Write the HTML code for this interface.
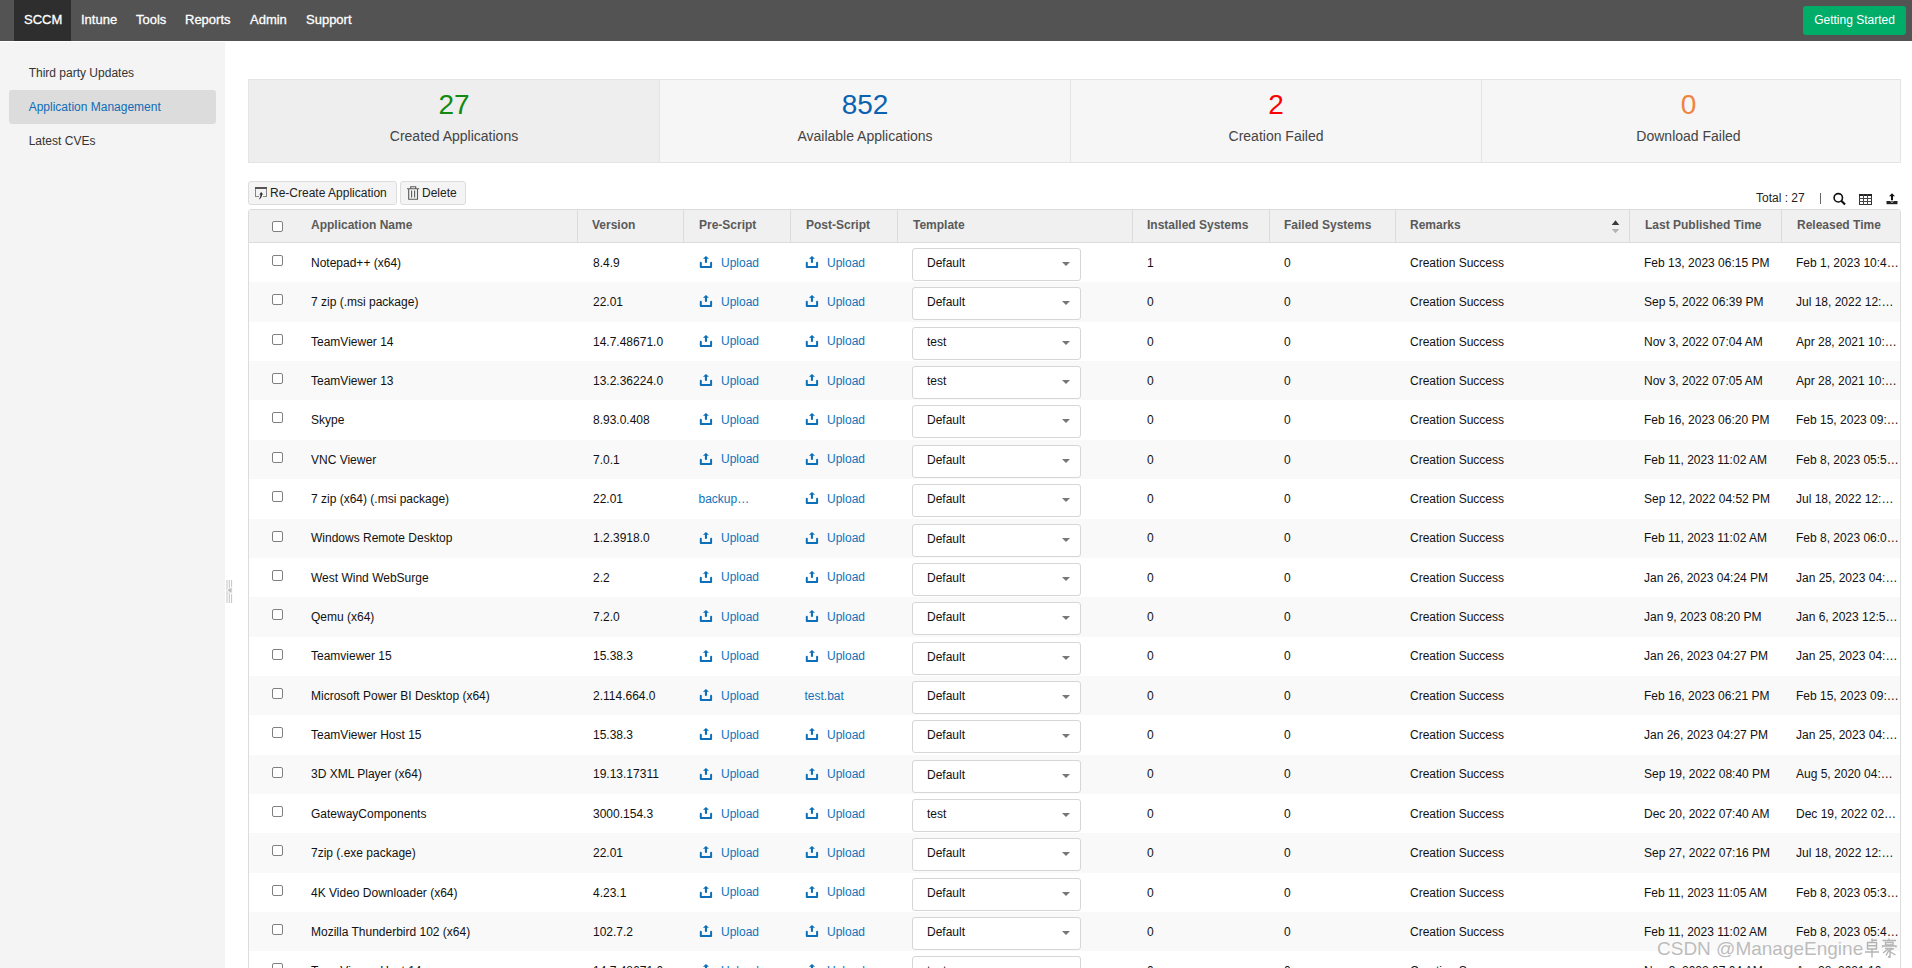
<!DOCTYPE html>
<html><head><meta charset="utf-8">
<style>
*{box-sizing:border-box;margin:0;padding:0}
html,body{width:1912px;height:968px;overflow:hidden;background:#fff;font-family:"Liberation Sans",sans-serif;color:#222}
.abs{position:absolute}
#nav{position:absolute;left:0;top:0;width:1912px;height:41px;background:#535353}
#nav .it{position:absolute;top:0;height:41px;line-height:39px;font-size:13px;color:#fff;white-space:nowrap;-webkit-text-stroke:0.3px #fff}
#nav .act{background:#2e2e2e}
#gs{position:absolute;left:1803px;top:6px;width:103px;height:29px;background:#00ad68;border-radius:3px;color:#fff;font-size:12px;line-height:29px;text-align:center}
#side{position:absolute;left:0;top:42px;width:225px;height:926px;background:#f4f4f4}
#side .si{position:absolute;left:9px;width:207px;height:34px;line-height:34px;padding-left:19.7px;font-size:12px;color:#333;border-radius:3px}
#side .sel{background:#dcdcdc;color:#0f6cb6}
#stats{position:absolute;left:248px;top:79px;width:1653px;height:84px;border:1px solid #e4e4e4;background:#f6f6f6}
.st{position:absolute;top:0;height:82px;text-align:center}
.st .n{position:absolute;left:0;right:0;top:8px;font-size:28px;line-height:34px}
.st .l{position:absolute;left:0;right:0;top:48px;font-size:14px;line-height:16px;color:#444}
.vd{position:absolute;top:0;width:1px;height:82px;background:#e4e4e4}
.btn{position:absolute;top:181px;height:24px;border:1px solid #dcdcdc;border-radius:3px;background:#f4f4f4;font-size:12px;line-height:22px;color:#222;white-space:nowrap}
#tbl{position:absolute;left:248px;top:209px;width:1653px;height:800px;border:1px solid #dcdcdc;border-radius:3px 3px 0 0;overflow:hidden}
#hd{position:absolute;left:0;top:0;width:1651px;height:33px;background:#f0f0f0;border-bottom:1px solid #dcdcdc}
#hd .h{position:absolute;top:0;height:32px;line-height:30px;font-size:12px;font-weight:bold;color:#5a5a5a;white-space:nowrap}
#hd .d{position:absolute;top:0;width:1px;height:32px;background:#dcdcdc}
.row{position:absolute;left:0;width:1651px;height:39.36px}
.row .c{position:absolute;top:0.8px;height:39.36px;line-height:39.36px;font-size:12px;color:#111;white-space:nowrap}
.row .lnk{color:#1172b9}
.row .rel{width:103px;overflow:hidden;text-overflow:ellipsis}
.cb{position:absolute;width:11px;height:11px;border:1px solid #808080;border-radius:2px;background:#fff}
.up{position:absolute;top:0.6px;height:39.36px;line-height:39.36px;font-size:12px;color:#1172b9;white-space:nowrap}
.up svg{position:absolute;left:-1px;top:11.4px}
.up span{position:absolute;left:21px;top:0}
.dd{position:absolute;top:5px;width:169px;height:33px;border:1px solid #d6d6d6;border-radius:3px;background:#fff}
.dd span{position:absolute;left:14px;top:-1px;line-height:31px;font-size:12px;color:#111}
.dd i{position:absolute;left:149px;top:13px;width:0;height:0;border-left:4px solid transparent;border-right:4px solid transparent;border-top:4px solid #777}
</style></head><body>
<div id="nav">
 <div class="it act" style="left:14px;width:57px;padding-left:10px">SCCM</div>
 <div class="it" style="left:81px">Intune</div>
 <div class="it" style="left:136px">Tools</div>
 <div class="it" style="left:185px">Reports</div>
 <div class="it" style="left:250px">Admin</div>
 <div class="it" style="left:306px">Support</div>
 <div id="gs">Getting Started</div>
</div>
<div id="side">
 <div class="si" style="top:14px">Third party Updates</div>
 <div class="si sel" style="top:48px">Application Management</div>
 <div class="si" style="top:82px">Latest CVEs</div>
</div>
<svg class="abs" style="left:226px;top:579px" width="7" height="25" viewBox="0 0 7 25"><path d="M1 1V24M3.3 1V24M5.6 1V24" stroke="#c4c4c4" stroke-width="1"/><path d="M6.3 7.2L0.2 11.3L6.3 15.4Z" fill="#fff"/><path d="M5.6 8.5L1.3 11.3L5.6 14.1Z" fill="#bdbdbd"/></svg>
<div id="stats">
 <div class="st" style="left:0;width:410px;background:#eeeeee"><div class="n" style="color:#118a11">27</div><div class="l">Created Applications</div></div>
 <div class="vd" style="left:410px"></div>
 <div class="st" style="left:411px;width:410px"><div class="n" style="color:#0b62b0">852</div><div class="l">Available Applications</div></div>
 <div class="vd" style="left:821px"></div>
 <div class="st" style="left:822px;width:410px"><div class="n" style="color:#ff0000">2</div><div class="l">Creation Failed</div></div>
 <div class="vd" style="left:1232px"></div>
 <div class="st" style="left:1233px;width:413px"><div class="n" style="color:#f0843d">0</div><div class="l">Download Failed</div></div>
</div>
<div class="btn" style="left:248px;width:149px;padding-left:21px">
 <svg class="abs" style="left:6px;top:5px" width="14" height="14" viewBox="0 0 14 14"><rect x="0" y="0" width="12" height="2" fill="#555"/><path d="M0.5 2V10M11.5 2V10M0 9.5H4M8 9.5H12" stroke="#858585" stroke-width="1" fill="none"/><path d="M6.2 5L8.2 7.4H7.1Q7 10.8 3.8 12.6Q5.6 10.6 5.4 7.4H4.3Z" fill="#333"/></svg>
 Re-Create Application</div>
<div class="btn" style="left:400px;width:66px;padding-left:21px">
 <svg class="abs" style="left:6px;top:4px" width="13" height="15" viewBox="0 0 13 15"><path d="M3.7 2.5V0.7H8.7V2.5M0 2.7H12.2M1.7 3V13.2H10.5V3M4.6 4.5V11.6M7.6 4.5V11.6" stroke="#5a5a5a" stroke-width="1.1" fill="none"/></svg>
 Delete</div>
<div class="abs" style="left:1756px;top:191px;font-size:12px;line-height:14px;color:#222">Total : 27</div>
<div class="abs" style="left:1820px;top:193px;width:1.4px;height:11px;background:#666"></div>
<svg class="abs" style="left:1832px;top:192px" width="15" height="14" viewBox="0 0 15 14"><circle cx="6.3" cy="5.8" r="4.2" fill="none" stroke="#111" stroke-width="1.6"/><path d="M9.3 8.8L13 12.5" stroke="#111" stroke-width="2.2"/></svg>
<svg class="abs" style="left:1859px;top:194px" width="13" height="11" viewBox="0 0 13 11" shape-rendering="crispEdges"><rect x="0.5" y="0.5" width="12" height="10" fill="none" stroke="#333" stroke-width="1"/><rect x="0" y="0" width="13" height="2" fill="#222"/><path d="M0 4.5H13M0 7.5H13M4.5 0V11M8.5 0V11" stroke="#444" stroke-width="1"/></svg>
<svg class="abs" style="left:1885px;top:193px" width="14" height="12" viewBox="0 0 14 12"><path d="M7 0.3L10 3.3H8V7.2H6V3.3H4Z" fill="#111"/><path d="M1.5 8H12.5V11.2H1.5Z" fill="#222"/><path d="M5.5 8.6Q7 10 8.5 8.6" fill="none" stroke="#fff" stroke-width="0.8"/></svg>
<div id="tbl">
 <div id="hd">
  <div class="cb" style="left:23px;top:11px"></div>
  <div class="h" style="left:62px">Application Name</div>
  <div class="d" style="left:328px"></div>
  <div class="h" style="left:343px">Version</div>
  <div class="d" style="left:434px"></div>
  <div class="h" style="left:450px">Pre-Script</div>
  <div class="d" style="left:541px"></div>
  <div class="h" style="left:557px">Post-Script</div>
  <div class="d" style="left:648px"></div>
  <div class="h" style="left:664px">Template</div>
  <div class="d" style="left:883px"></div>
  <div class="h" style="left:898px">Installed Systems</div>
  <div class="d" style="left:1020px"></div>
  <div class="h" style="left:1035px">Failed Systems</div>
  <div class="d" style="left:1146px"></div>
  <div class="h" style="left:1161px">Remarks</div>
  <svg class="abs" style="left:1362px;top:10px" width="9" height="14" viewBox="0 0 9 14"><path d="M0.7 5L4.5 0.3L8.3 5Z" fill="#3a3a3a"/><path d="M0.7 9L4.5 13.2L8.3 9Z" fill="#b3b3b3"/></svg>
  <div class="d" style="left:1380px"></div>
  <div class="h" style="left:1396px">Last Published Time</div>
  <div class="d" style="left:1532px"></div>
  <div class="h" style="left:1548px">Released Time</div>
 </div>
 <div class="row" style="top:33.00px;background:#fff"><div class="cb" style="left:23px;top:12px"></div><div class="c" style="left:62px">Notepad++ (x64)</div><div class="c" style="left:344px">8.4.9</div><div class="up" style="left:451px"><svg width="14" height="14" viewBox="0 0 14 14"><path d="M1.8 7.8V11.9H12.1V7.8" fill="none" stroke="#0b6fba" stroke-width="2" stroke-linecap="round" stroke-linejoin="round"/><path d="M6.95 1L10 3.8H8V7.2Q8 7.9 6.95 7.9Q5.9 7.9 5.9 7.2V3.8H3.9Z" fill="#0b6fba"/></svg><span>Upload</span></div><div class="up" style="left:557px"><svg width="14" height="14" viewBox="0 0 14 14"><path d="M1.8 7.8V11.9H12.1V7.8" fill="none" stroke="#0b6fba" stroke-width="2" stroke-linecap="round" stroke-linejoin="round"/><path d="M6.95 1L10 3.8H8V7.2Q8 7.9 6.95 7.9Q5.9 7.9 5.9 7.2V3.8H3.9Z" fill="#0b6fba"/></svg><span>Upload</span></div><div class="dd" style="left:663px"><span>Default</span><i></i></div><div class="c" style="left:898px">1</div><div class="c" style="left:1035px">0</div><div class="c" style="left:1161px">Creation Success</div><div class="c" style="left:1395px">Feb 13, 2023 06:15 PM</div><div class="c rel" style="left:1547px">Feb 1, 2023 10:45 AM</div></div><div class="row" style="top:72.36px;background:#f9f9f9"><div class="cb" style="left:23px;top:12px"></div><div class="c" style="left:62px">7 zip (.msi package)</div><div class="c" style="left:344px">22.01</div><div class="up" style="left:451px"><svg width="14" height="14" viewBox="0 0 14 14"><path d="M1.8 7.8V11.9H12.1V7.8" fill="none" stroke="#0b6fba" stroke-width="2" stroke-linecap="round" stroke-linejoin="round"/><path d="M6.95 1L10 3.8H8V7.2Q8 7.9 6.95 7.9Q5.9 7.9 5.9 7.2V3.8H3.9Z" fill="#0b6fba"/></svg><span>Upload</span></div><div class="up" style="left:557px"><svg width="14" height="14" viewBox="0 0 14 14"><path d="M1.8 7.8V11.9H12.1V7.8" fill="none" stroke="#0b6fba" stroke-width="2" stroke-linecap="round" stroke-linejoin="round"/><path d="M6.95 1L10 3.8H8V7.2Q8 7.9 6.95 7.9Q5.9 7.9 5.9 7.2V3.8H3.9Z" fill="#0b6fba"/></svg><span>Upload</span></div><div class="dd" style="left:663px"><span>Default</span><i></i></div><div class="c" style="left:898px">0</div><div class="c" style="left:1035px">0</div><div class="c" style="left:1161px">Creation Success</div><div class="c" style="left:1395px">Sep 5, 2022 06:39 PM</div><div class="c rel" style="left:1547px">Jul 18, 2022 12:00 PM</div></div><div class="row" style="top:111.72px;background:#fff"><div class="cb" style="left:23px;top:12px"></div><div class="c" style="left:62px">TeamViewer 14</div><div class="c" style="left:344px">14.7.48671.0</div><div class="up" style="left:451px"><svg width="14" height="14" viewBox="0 0 14 14"><path d="M1.8 7.8V11.9H12.1V7.8" fill="none" stroke="#0b6fba" stroke-width="2" stroke-linecap="round" stroke-linejoin="round"/><path d="M6.95 1L10 3.8H8V7.2Q8 7.9 6.95 7.9Q5.9 7.9 5.9 7.2V3.8H3.9Z" fill="#0b6fba"/></svg><span>Upload</span></div><div class="up" style="left:557px"><svg width="14" height="14" viewBox="0 0 14 14"><path d="M1.8 7.8V11.9H12.1V7.8" fill="none" stroke="#0b6fba" stroke-width="2" stroke-linecap="round" stroke-linejoin="round"/><path d="M6.95 1L10 3.8H8V7.2Q8 7.9 6.95 7.9Q5.9 7.9 5.9 7.2V3.8H3.9Z" fill="#0b6fba"/></svg><span>Upload</span></div><div class="dd" style="left:663px"><span>test</span><i></i></div><div class="c" style="left:898px">0</div><div class="c" style="left:1035px">0</div><div class="c" style="left:1161px">Creation Success</div><div class="c" style="left:1395px">Nov 3, 2022 07:04 AM</div><div class="c rel" style="left:1547px">Apr 28, 2021 10:00 AM</div></div><div class="row" style="top:151.08px;background:#f9f9f9"><div class="cb" style="left:23px;top:12px"></div><div class="c" style="left:62px">TeamViewer 13</div><div class="c" style="left:344px">13.2.36224.0</div><div class="up" style="left:451px"><svg width="14" height="14" viewBox="0 0 14 14"><path d="M1.8 7.8V11.9H12.1V7.8" fill="none" stroke="#0b6fba" stroke-width="2" stroke-linecap="round" stroke-linejoin="round"/><path d="M6.95 1L10 3.8H8V7.2Q8 7.9 6.95 7.9Q5.9 7.9 5.9 7.2V3.8H3.9Z" fill="#0b6fba"/></svg><span>Upload</span></div><div class="up" style="left:557px"><svg width="14" height="14" viewBox="0 0 14 14"><path d="M1.8 7.8V11.9H12.1V7.8" fill="none" stroke="#0b6fba" stroke-width="2" stroke-linecap="round" stroke-linejoin="round"/><path d="M6.95 1L10 3.8H8V7.2Q8 7.9 6.95 7.9Q5.9 7.9 5.9 7.2V3.8H3.9Z" fill="#0b6fba"/></svg><span>Upload</span></div><div class="dd" style="left:663px"><span>test</span><i></i></div><div class="c" style="left:898px">0</div><div class="c" style="left:1035px">0</div><div class="c" style="left:1161px">Creation Success</div><div class="c" style="left:1395px">Nov 3, 2022 07:05 AM</div><div class="c rel" style="left:1547px">Apr 28, 2021 10:00 AM</div></div><div class="row" style="top:190.44px;background:#fff"><div class="cb" style="left:23px;top:12px"></div><div class="c" style="left:62px">Skype</div><div class="c" style="left:344px">8.93.0.408</div><div class="up" style="left:451px"><svg width="14" height="14" viewBox="0 0 14 14"><path d="M1.8 7.8V11.9H12.1V7.8" fill="none" stroke="#0b6fba" stroke-width="2" stroke-linecap="round" stroke-linejoin="round"/><path d="M6.95 1L10 3.8H8V7.2Q8 7.9 6.95 7.9Q5.9 7.9 5.9 7.2V3.8H3.9Z" fill="#0b6fba"/></svg><span>Upload</span></div><div class="up" style="left:557px"><svg width="14" height="14" viewBox="0 0 14 14"><path d="M1.8 7.8V11.9H12.1V7.8" fill="none" stroke="#0b6fba" stroke-width="2" stroke-linecap="round" stroke-linejoin="round"/><path d="M6.95 1L10 3.8H8V7.2Q8 7.9 6.95 7.9Q5.9 7.9 5.9 7.2V3.8H3.9Z" fill="#0b6fba"/></svg><span>Upload</span></div><div class="dd" style="left:663px"><span>Default</span><i></i></div><div class="c" style="left:898px">0</div><div class="c" style="left:1035px">0</div><div class="c" style="left:1161px">Creation Success</div><div class="c" style="left:1395px">Feb 16, 2023 06:20 PM</div><div class="c rel" style="left:1547px">Feb 15, 2023 09:00 AM</div></div><div class="row" style="top:229.80px;background:#f9f9f9"><div class="cb" style="left:23px;top:12px"></div><div class="c" style="left:62px">VNC Viewer</div><div class="c" style="left:344px">7.0.1</div><div class="up" style="left:451px"><svg width="14" height="14" viewBox="0 0 14 14"><path d="M1.8 7.8V11.9H12.1V7.8" fill="none" stroke="#0b6fba" stroke-width="2" stroke-linecap="round" stroke-linejoin="round"/><path d="M6.95 1L10 3.8H8V7.2Q8 7.9 6.95 7.9Q5.9 7.9 5.9 7.2V3.8H3.9Z" fill="#0b6fba"/></svg><span>Upload</span></div><div class="up" style="left:557px"><svg width="14" height="14" viewBox="0 0 14 14"><path d="M1.8 7.8V11.9H12.1V7.8" fill="none" stroke="#0b6fba" stroke-width="2" stroke-linecap="round" stroke-linejoin="round"/><path d="M6.95 1L10 3.8H8V7.2Q8 7.9 6.95 7.9Q5.9 7.9 5.9 7.2V3.8H3.9Z" fill="#0b6fba"/></svg><span>Upload</span></div><div class="dd" style="left:663px"><span>Default</span><i></i></div><div class="c" style="left:898px">0</div><div class="c" style="left:1035px">0</div><div class="c" style="left:1161px">Creation Success</div><div class="c" style="left:1395px">Feb 11, 2023 11:02 AM</div><div class="c rel" style="left:1547px">Feb 8, 2023 05:50 AM</div></div><div class="row" style="top:269.16px;background:#fff"><div class="cb" style="left:23px;top:12px"></div><div class="c" style="left:62px">7 zip (x64) (.msi package)</div><div class="c" style="left:344px">22.01</div><div class="c lnk" style="left:449.5px">backup…</div><div class="up" style="left:557px"><svg width="14" height="14" viewBox="0 0 14 14"><path d="M1.8 7.8V11.9H12.1V7.8" fill="none" stroke="#0b6fba" stroke-width="2" stroke-linecap="round" stroke-linejoin="round"/><path d="M6.95 1L10 3.8H8V7.2Q8 7.9 6.95 7.9Q5.9 7.9 5.9 7.2V3.8H3.9Z" fill="#0b6fba"/></svg><span>Upload</span></div><div class="dd" style="left:663px"><span>Default</span><i></i></div><div class="c" style="left:898px">0</div><div class="c" style="left:1035px">0</div><div class="c" style="left:1161px">Creation Success</div><div class="c" style="left:1395px">Sep 12, 2022 04:52 PM</div><div class="c rel" style="left:1547px">Jul 18, 2022 12:00 PM</div></div><div class="row" style="top:308.52px;background:#f9f9f9"><div class="cb" style="left:23px;top:12px"></div><div class="c" style="left:62px">Windows Remote Desktop</div><div class="c" style="left:344px">1.2.3918.0</div><div class="up" style="left:451px"><svg width="14" height="14" viewBox="0 0 14 14"><path d="M1.8 7.8V11.9H12.1V7.8" fill="none" stroke="#0b6fba" stroke-width="2" stroke-linecap="round" stroke-linejoin="round"/><path d="M6.95 1L10 3.8H8V7.2Q8 7.9 6.95 7.9Q5.9 7.9 5.9 7.2V3.8H3.9Z" fill="#0b6fba"/></svg><span>Upload</span></div><div class="up" style="left:557px"><svg width="14" height="14" viewBox="0 0 14 14"><path d="M1.8 7.8V11.9H12.1V7.8" fill="none" stroke="#0b6fba" stroke-width="2" stroke-linecap="round" stroke-linejoin="round"/><path d="M6.95 1L10 3.8H8V7.2Q8 7.9 6.95 7.9Q5.9 7.9 5.9 7.2V3.8H3.9Z" fill="#0b6fba"/></svg><span>Upload</span></div><div class="dd" style="left:663px"><span>Default</span><i></i></div><div class="c" style="left:898px">0</div><div class="c" style="left:1035px">0</div><div class="c" style="left:1161px">Creation Success</div><div class="c" style="left:1395px">Feb 11, 2023 11:02 AM</div><div class="c rel" style="left:1547px">Feb 8, 2023 06:00 AM</div></div><div class="row" style="top:347.88px;background:#fff"><div class="cb" style="left:23px;top:12px"></div><div class="c" style="left:62px">West Wind WebSurge</div><div class="c" style="left:344px">2.2</div><div class="up" style="left:451px"><svg width="14" height="14" viewBox="0 0 14 14"><path d="M1.8 7.8V11.9H12.1V7.8" fill="none" stroke="#0b6fba" stroke-width="2" stroke-linecap="round" stroke-linejoin="round"/><path d="M6.95 1L10 3.8H8V7.2Q8 7.9 6.95 7.9Q5.9 7.9 5.9 7.2V3.8H3.9Z" fill="#0b6fba"/></svg><span>Upload</span></div><div class="up" style="left:557px"><svg width="14" height="14" viewBox="0 0 14 14"><path d="M1.8 7.8V11.9H12.1V7.8" fill="none" stroke="#0b6fba" stroke-width="2" stroke-linecap="round" stroke-linejoin="round"/><path d="M6.95 1L10 3.8H8V7.2Q8 7.9 6.95 7.9Q5.9 7.9 5.9 7.2V3.8H3.9Z" fill="#0b6fba"/></svg><span>Upload</span></div><div class="dd" style="left:663px"><span>Default</span><i></i></div><div class="c" style="left:898px">0</div><div class="c" style="left:1035px">0</div><div class="c" style="left:1161px">Creation Success</div><div class="c" style="left:1395px">Jan 26, 2023 04:24 PM</div><div class="c rel" style="left:1547px">Jan 25, 2023 04:00 PM</div></div><div class="row" style="top:387.24px;background:#f9f9f9"><div class="cb" style="left:23px;top:12px"></div><div class="c" style="left:62px">Qemu (x64)</div><div class="c" style="left:344px">7.2.0</div><div class="up" style="left:451px"><svg width="14" height="14" viewBox="0 0 14 14"><path d="M1.8 7.8V11.9H12.1V7.8" fill="none" stroke="#0b6fba" stroke-width="2" stroke-linecap="round" stroke-linejoin="round"/><path d="M6.95 1L10 3.8H8V7.2Q8 7.9 6.95 7.9Q5.9 7.9 5.9 7.2V3.8H3.9Z" fill="#0b6fba"/></svg><span>Upload</span></div><div class="up" style="left:557px"><svg width="14" height="14" viewBox="0 0 14 14"><path d="M1.8 7.8V11.9H12.1V7.8" fill="none" stroke="#0b6fba" stroke-width="2" stroke-linecap="round" stroke-linejoin="round"/><path d="M6.95 1L10 3.8H8V7.2Q8 7.9 6.95 7.9Q5.9 7.9 5.9 7.2V3.8H3.9Z" fill="#0b6fba"/></svg><span>Upload</span></div><div class="dd" style="left:663px"><span>Default</span><i></i></div><div class="c" style="left:898px">0</div><div class="c" style="left:1035px">0</div><div class="c" style="left:1161px">Creation Success</div><div class="c" style="left:1395px">Jan 9, 2023 08:20 PM</div><div class="c rel" style="left:1547px">Jan 6, 2023 12:50 PM</div></div><div class="row" style="top:426.60px;background:#fff"><div class="cb" style="left:23px;top:12px"></div><div class="c" style="left:62px">Teamviewer 15</div><div class="c" style="left:344px">15.38.3</div><div class="up" style="left:451px"><svg width="14" height="14" viewBox="0 0 14 14"><path d="M1.8 7.8V11.9H12.1V7.8" fill="none" stroke="#0b6fba" stroke-width="2" stroke-linecap="round" stroke-linejoin="round"/><path d="M6.95 1L10 3.8H8V7.2Q8 7.9 6.95 7.9Q5.9 7.9 5.9 7.2V3.8H3.9Z" fill="#0b6fba"/></svg><span>Upload</span></div><div class="up" style="left:557px"><svg width="14" height="14" viewBox="0 0 14 14"><path d="M1.8 7.8V11.9H12.1V7.8" fill="none" stroke="#0b6fba" stroke-width="2" stroke-linecap="round" stroke-linejoin="round"/><path d="M6.95 1L10 3.8H8V7.2Q8 7.9 6.95 7.9Q5.9 7.9 5.9 7.2V3.8H3.9Z" fill="#0b6fba"/></svg><span>Upload</span></div><div class="dd" style="left:663px"><span>Default</span><i></i></div><div class="c" style="left:898px">0</div><div class="c" style="left:1035px">0</div><div class="c" style="left:1161px">Creation Success</div><div class="c" style="left:1395px">Jan 26, 2023 04:27 PM</div><div class="c rel" style="left:1547px">Jan 25, 2023 04:00 PM</div></div><div class="row" style="top:465.96px;background:#f9f9f9"><div class="cb" style="left:23px;top:12px"></div><div class="c" style="left:62px">Microsoft Power BI Desktop (x64)</div><div class="c" style="left:344px">2.114.664.0</div><div class="up" style="left:451px"><svg width="14" height="14" viewBox="0 0 14 14"><path d="M1.8 7.8V11.9H12.1V7.8" fill="none" stroke="#0b6fba" stroke-width="2" stroke-linecap="round" stroke-linejoin="round"/><path d="M6.95 1L10 3.8H8V7.2Q8 7.9 6.95 7.9Q5.9 7.9 5.9 7.2V3.8H3.9Z" fill="#0b6fba"/></svg><span>Upload</span></div><div class="c lnk" style="left:555.5px">test.bat</div><div class="dd" style="left:663px"><span>Default</span><i></i></div><div class="c" style="left:898px">0</div><div class="c" style="left:1035px">0</div><div class="c" style="left:1161px">Creation Success</div><div class="c" style="left:1395px">Feb 16, 2023 06:21 PM</div><div class="c rel" style="left:1547px">Feb 15, 2023 09:00 AM</div></div><div class="row" style="top:505.32px;background:#fff"><div class="cb" style="left:23px;top:12px"></div><div class="c" style="left:62px">TeamViewer Host 15</div><div class="c" style="left:344px">15.38.3</div><div class="up" style="left:451px"><svg width="14" height="14" viewBox="0 0 14 14"><path d="M1.8 7.8V11.9H12.1V7.8" fill="none" stroke="#0b6fba" stroke-width="2" stroke-linecap="round" stroke-linejoin="round"/><path d="M6.95 1L10 3.8H8V7.2Q8 7.9 6.95 7.9Q5.9 7.9 5.9 7.2V3.8H3.9Z" fill="#0b6fba"/></svg><span>Upload</span></div><div class="up" style="left:557px"><svg width="14" height="14" viewBox="0 0 14 14"><path d="M1.8 7.8V11.9H12.1V7.8" fill="none" stroke="#0b6fba" stroke-width="2" stroke-linecap="round" stroke-linejoin="round"/><path d="M6.95 1L10 3.8H8V7.2Q8 7.9 6.95 7.9Q5.9 7.9 5.9 7.2V3.8H3.9Z" fill="#0b6fba"/></svg><span>Upload</span></div><div class="dd" style="left:663px"><span>Default</span><i></i></div><div class="c" style="left:898px">0</div><div class="c" style="left:1035px">0</div><div class="c" style="left:1161px">Creation Success</div><div class="c" style="left:1395px">Jan 26, 2023 04:27 PM</div><div class="c rel" style="left:1547px">Jan 25, 2023 04:00 PM</div></div><div class="row" style="top:544.68px;background:#f9f9f9"><div class="cb" style="left:23px;top:12px"></div><div class="c" style="left:62px">3D XML Player (x64)</div><div class="c" style="left:344px">19.13.17311</div><div class="up" style="left:451px"><svg width="14" height="14" viewBox="0 0 14 14"><path d="M1.8 7.8V11.9H12.1V7.8" fill="none" stroke="#0b6fba" stroke-width="2" stroke-linecap="round" stroke-linejoin="round"/><path d="M6.95 1L10 3.8H8V7.2Q8 7.9 6.95 7.9Q5.9 7.9 5.9 7.2V3.8H3.9Z" fill="#0b6fba"/></svg><span>Upload</span></div><div class="up" style="left:557px"><svg width="14" height="14" viewBox="0 0 14 14"><path d="M1.8 7.8V11.9H12.1V7.8" fill="none" stroke="#0b6fba" stroke-width="2" stroke-linecap="round" stroke-linejoin="round"/><path d="M6.95 1L10 3.8H8V7.2Q8 7.9 6.95 7.9Q5.9 7.9 5.9 7.2V3.8H3.9Z" fill="#0b6fba"/></svg><span>Upload</span></div><div class="dd" style="left:663px"><span>Default</span><i></i></div><div class="c" style="left:898px">0</div><div class="c" style="left:1035px">0</div><div class="c" style="left:1161px">Creation Success</div><div class="c" style="left:1395px">Sep 19, 2022 08:40 PM</div><div class="c rel" style="left:1547px">Aug 5, 2020 04:00 PM</div></div><div class="row" style="top:584.04px;background:#fff"><div class="cb" style="left:23px;top:12px"></div><div class="c" style="left:62px">GatewayComponents</div><div class="c" style="left:344px">3000.154.3</div><div class="up" style="left:451px"><svg width="14" height="14" viewBox="0 0 14 14"><path d="M1.8 7.8V11.9H12.1V7.8" fill="none" stroke="#0b6fba" stroke-width="2" stroke-linecap="round" stroke-linejoin="round"/><path d="M6.95 1L10 3.8H8V7.2Q8 7.9 6.95 7.9Q5.9 7.9 5.9 7.2V3.8H3.9Z" fill="#0b6fba"/></svg><span>Upload</span></div><div class="up" style="left:557px"><svg width="14" height="14" viewBox="0 0 14 14"><path d="M1.8 7.8V11.9H12.1V7.8" fill="none" stroke="#0b6fba" stroke-width="2" stroke-linecap="round" stroke-linejoin="round"/><path d="M6.95 1L10 3.8H8V7.2Q8 7.9 6.95 7.9Q5.9 7.9 5.9 7.2V3.8H3.9Z" fill="#0b6fba"/></svg><span>Upload</span></div><div class="dd" style="left:663px"><span>test</span><i></i></div><div class="c" style="left:898px">0</div><div class="c" style="left:1035px">0</div><div class="c" style="left:1161px">Creation Success</div><div class="c" style="left:1395px">Dec 20, 2022 07:40 AM</div><div class="c rel" style="left:1547px">Dec 19, 2022 02:00 PM</div></div><div class="row" style="top:623.40px;background:#f9f9f9"><div class="cb" style="left:23px;top:12px"></div><div class="c" style="left:62px">7zip (.exe package)</div><div class="c" style="left:344px">22.01</div><div class="up" style="left:451px"><svg width="14" height="14" viewBox="0 0 14 14"><path d="M1.8 7.8V11.9H12.1V7.8" fill="none" stroke="#0b6fba" stroke-width="2" stroke-linecap="round" stroke-linejoin="round"/><path d="M6.95 1L10 3.8H8V7.2Q8 7.9 6.95 7.9Q5.9 7.9 5.9 7.2V3.8H3.9Z" fill="#0b6fba"/></svg><span>Upload</span></div><div class="up" style="left:557px"><svg width="14" height="14" viewBox="0 0 14 14"><path d="M1.8 7.8V11.9H12.1V7.8" fill="none" stroke="#0b6fba" stroke-width="2" stroke-linecap="round" stroke-linejoin="round"/><path d="M6.95 1L10 3.8H8V7.2Q8 7.9 6.95 7.9Q5.9 7.9 5.9 7.2V3.8H3.9Z" fill="#0b6fba"/></svg><span>Upload</span></div><div class="dd" style="left:663px"><span>Default</span><i></i></div><div class="c" style="left:898px">0</div><div class="c" style="left:1035px">0</div><div class="c" style="left:1161px">Creation Success</div><div class="c" style="left:1395px">Sep 27, 2022 07:16 PM</div><div class="c rel" style="left:1547px">Jul 18, 2022 12:00 PM</div></div><div class="row" style="top:662.76px;background:#fff"><div class="cb" style="left:23px;top:12px"></div><div class="c" style="left:62px">4K Video Downloader (x64)</div><div class="c" style="left:344px">4.23.1</div><div class="up" style="left:451px"><svg width="14" height="14" viewBox="0 0 14 14"><path d="M1.8 7.8V11.9H12.1V7.8" fill="none" stroke="#0b6fba" stroke-width="2" stroke-linecap="round" stroke-linejoin="round"/><path d="M6.95 1L10 3.8H8V7.2Q8 7.9 6.95 7.9Q5.9 7.9 5.9 7.2V3.8H3.9Z" fill="#0b6fba"/></svg><span>Upload</span></div><div class="up" style="left:557px"><svg width="14" height="14" viewBox="0 0 14 14"><path d="M1.8 7.8V11.9H12.1V7.8" fill="none" stroke="#0b6fba" stroke-width="2" stroke-linecap="round" stroke-linejoin="round"/><path d="M6.95 1L10 3.8H8V7.2Q8 7.9 6.95 7.9Q5.9 7.9 5.9 7.2V3.8H3.9Z" fill="#0b6fba"/></svg><span>Upload</span></div><div class="dd" style="left:663px"><span>Default</span><i></i></div><div class="c" style="left:898px">0</div><div class="c" style="left:1035px">0</div><div class="c" style="left:1161px">Creation Success</div><div class="c" style="left:1395px">Feb 11, 2023 11:05 AM</div><div class="c rel" style="left:1547px">Feb 8, 2023 05:30 AM</div></div><div class="row" style="top:702.12px;background:#f9f9f9"><div class="cb" style="left:23px;top:12px"></div><div class="c" style="left:62px">Mozilla Thunderbird 102 (x64)</div><div class="c" style="left:344px">102.7.2</div><div class="up" style="left:451px"><svg width="14" height="14" viewBox="0 0 14 14"><path d="M1.8 7.8V11.9H12.1V7.8" fill="none" stroke="#0b6fba" stroke-width="2" stroke-linecap="round" stroke-linejoin="round"/><path d="M6.95 1L10 3.8H8V7.2Q8 7.9 6.95 7.9Q5.9 7.9 5.9 7.2V3.8H3.9Z" fill="#0b6fba"/></svg><span>Upload</span></div><div class="up" style="left:557px"><svg width="14" height="14" viewBox="0 0 14 14"><path d="M1.8 7.8V11.9H12.1V7.8" fill="none" stroke="#0b6fba" stroke-width="2" stroke-linecap="round" stroke-linejoin="round"/><path d="M6.95 1L10 3.8H8V7.2Q8 7.9 6.95 7.9Q5.9 7.9 5.9 7.2V3.8H3.9Z" fill="#0b6fba"/></svg><span>Upload</span></div><div class="dd" style="left:663px"><span>Default</span><i></i></div><div class="c" style="left:898px">0</div><div class="c" style="left:1035px">0</div><div class="c" style="left:1161px">Creation Success</div><div class="c" style="left:1395px">Feb 11, 2023 11:02 AM</div><div class="c rel" style="left:1547px">Feb 8, 2023 05:40 AM</div></div><div class="row" style="top:741.48px;background:#fff"><div class="cb" style="left:23px;top:12px"></div><div class="c" style="left:62px">TeamViewer Host 14</div><div class="c" style="left:344px">14.7.48671.0</div><div class="up" style="left:451px"><svg width="14" height="14" viewBox="0 0 14 14"><path d="M1.8 7.8V11.9H12.1V7.8" fill="none" stroke="#0b6fba" stroke-width="2" stroke-linecap="round" stroke-linejoin="round"/><path d="M6.95 1L10 3.8H8V7.2Q8 7.9 6.95 7.9Q5.9 7.9 5.9 7.2V3.8H3.9Z" fill="#0b6fba"/></svg><span>Upload</span></div><div class="up" style="left:557px"><svg width="14" height="14" viewBox="0 0 14 14"><path d="M1.8 7.8V11.9H12.1V7.8" fill="none" stroke="#0b6fba" stroke-width="2" stroke-linecap="round" stroke-linejoin="round"/><path d="M6.95 1L10 3.8H8V7.2Q8 7.9 6.95 7.9Q5.9 7.9 5.9 7.2V3.8H3.9Z" fill="#0b6fba"/></svg><span>Upload</span></div><div class="dd" style="left:663px"><span>test</span><i></i></div><div class="c" style="left:898px">0</div><div class="c" style="left:1035px">0</div><div class="c" style="left:1161px">Creation Success</div><div class="c" style="left:1395px">Nov 3, 2022 07:04 AM</div><div class="c rel" style="left:1547px">Apr 28, 2021 10:00 AM</div></div>
</div>
<div class="abs" style="left:1657px;top:938px;font-size:19px;line-height:22px;color:#bcbcbc;white-space:nowrap;text-shadow:0 0 1px #fff,1px 1px 0 rgba(255,255,255,.6)">CSDN @ManageEngine</div>
<svg class="abs" style="left:1864px;top:938px" width="34" height="20" viewBox="0 0 34 20"><g stroke="#b4b4b4" stroke-width="1.4" fill="none"><path d="M8 0.5V4M8 2.2H13M3.5 4.5H12.5V11H3.5ZM3.5 7.7H12.5M1 14H15M8 11V19.5"/><path d="M25 0.5V2.5M18.5 2.5H32M21.5 4.5H29V7H21.5ZM18.5 9.5V8H32V9.5M21 10.5H28M25 10.5L19 15M25 12L22 17.5M26 12V19.5L24 18.5M25 13L31.5 17M25.5 12L30 10.5"/></g></svg>
</body></html>
